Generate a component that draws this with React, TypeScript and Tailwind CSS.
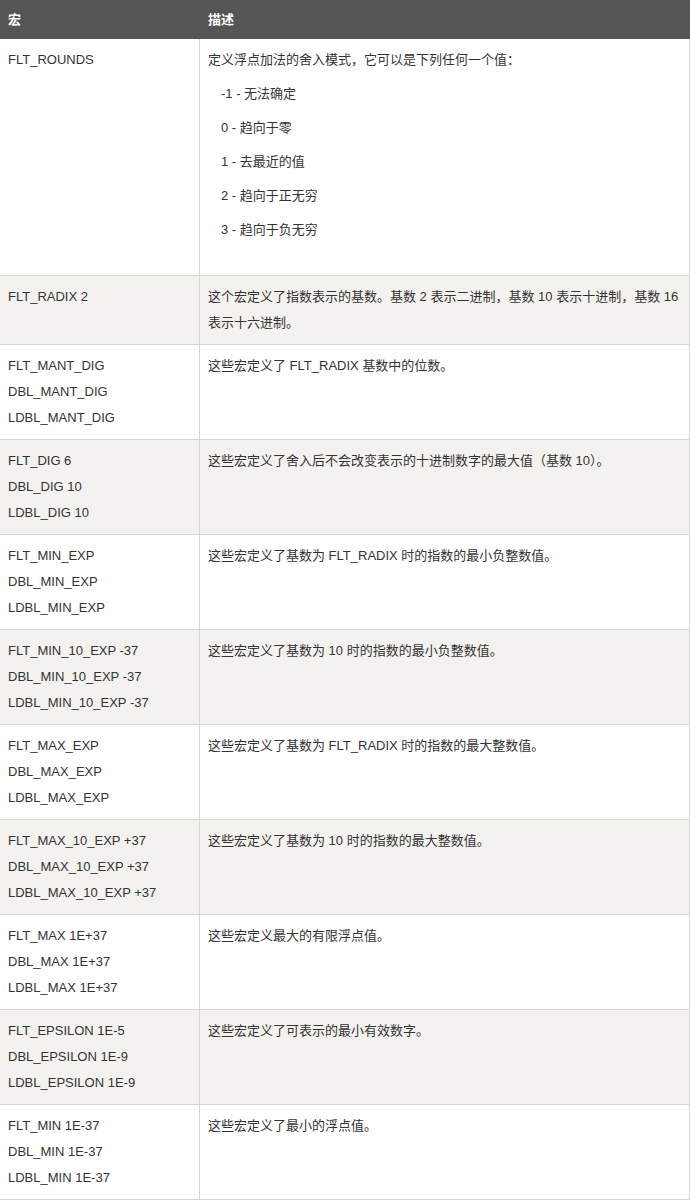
import React from "react";

type Row = { names: string[]; desc: React.ReactNode; alt: boolean };

const rows: Row[] = [
  {
    names: ["FLT_RADIX 2"],
    desc: "这个宏定义了指数表示的基数。基数 2 表示二进制，基数 10 表示十进制，基数 16 表示十六进制。",
    alt: true,
  },
  { names: ["FLT_MANT_DIG", "DBL_MANT_DIG", "LDBL_MANT_DIG"], desc: "这些宏定义了 FLT_RADIX 基数中的位数。", alt: false },
  { names: ["FLT_DIG 6", "DBL_DIG 10", "LDBL_DIG 10"], desc: "这些宏定义了舍入后不会改变表示的十进制数字的最大值（基数 10）。", alt: true },
  { names: ["FLT_MIN_EXP", "DBL_MIN_EXP", "LDBL_MIN_EXP"], desc: "这些宏定义了基数为 FLT_RADIX 时的指数的最小负整数值。", alt: false },
  { names: ["FLT_MIN_10_EXP -37", "DBL_MIN_10_EXP -37", "LDBL_MIN_10_EXP -37"], desc: "这些宏定义了基数为 10 时的指数的最小负整数值。", alt: true },
  { names: ["FLT_MAX_EXP", "DBL_MAX_EXP", "LDBL_MAX_EXP"], desc: "这些宏定义了基数为 FLT_RADIX 时的指数的最大整数值。", alt: false },
  { names: ["FLT_MAX_10_EXP +37", "DBL_MAX_10_EXP +37", "LDBL_MAX_10_EXP +37"], desc: "这些宏定义了基数为 10 时的指数的最大整数值。", alt: true },
  { names: ["FLT_MAX 1E+37", "DBL_MAX 1E+37", "LDBL_MAX 1E+37"], desc: "这些宏定义最大的有限浮点值。", alt: false },
  { names: ["FLT_EPSILON 1E-5", "DBL_EPSILON 1E-9", "LDBL_EPSILON 1E-9"], desc: "这些宏定义了可表示的最小有效数字。", alt: true },
  { names: ["FLT_MIN 1E-37", "DBL_MIN 1E-37", "LDBL_MIN 1E-37"], desc: "这些宏定义了最小的浮点值。", alt: false },
];

const roundsItems = ["-1 - 无法确定", "0 - 趋向于零", "1 - 去最近的值", "2 - 趋向于正无穷", "3 - 趋向于负无穷"];

export default function App() {
  return (
    <div
      className="w-[690px] bg-white text-[13px] leading-[26px] text-[#333333]"
      style={{ fontFamily: '"Liberation Sans", Arial, "Noto Sans CJK SC", sans-serif' }}
    >
      <div className="flex h-[39px] items-center bg-[#555555] font-bold text-white">
        <div className="w-[200px] px-2">宏</div>
        <div className="flex-1 px-2">描述</div>
      </div>

      <div className="flex border-b border-[#d6d6d6] bg-white">
        <div className="w-[200px] shrink-0 border-r border-[#d6d6d6] px-2 pt-2">FLT_ROUNDS</div>
        <div className="flex-1 border-r border-[#d6d6d6] px-2 pt-2 pb-[32px]">
          <p>定义浮点加法的舍入模式，它可以是下列任何一个值：</p>
          {roundsItems.map((t) => (
            <p key={t} className="mt-2 pl-[13px]">
              {t}
            </p>
          ))}
        </div>
      </div>

      {rows.map((r, i) => (
        <div
          key={i}
          className={`flex border-b border-[#d6d6d6] ${r.alt ? "bg-[#f3f2ef]" : "bg-white"}`}
        >
          <div className="w-[200px] shrink-0 border-r border-[#d6d6d6] px-2 pt-2 pb-2">
            {r.names.map((n) => (
              <div key={n}>{n}</div>
            ))}
          </div>
          <div className="flex-1 border-r border-[#d6d6d6] px-2 pt-2 pb-2">{r.desc}</div>
        </div>
      ))}
    </div>
  );
}
